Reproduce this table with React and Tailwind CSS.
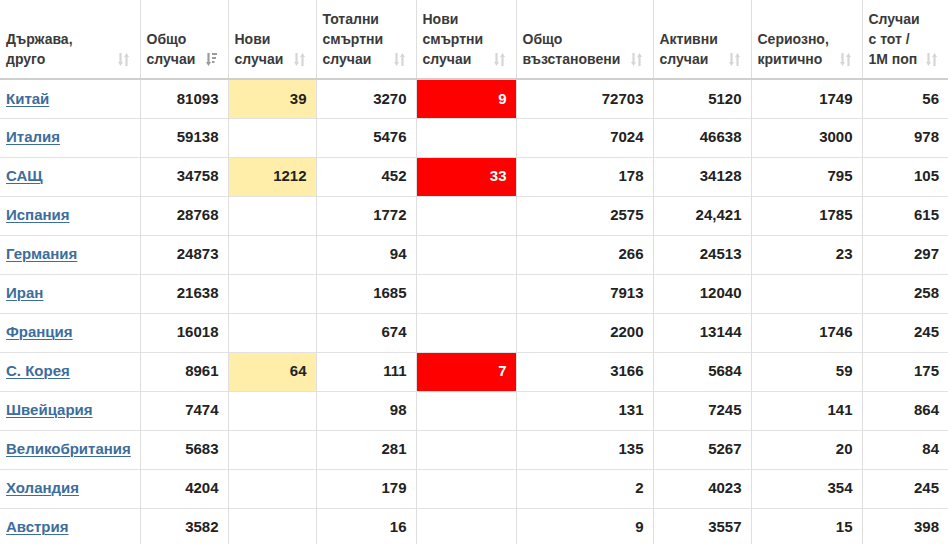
import React from "react";

const cols = [
  { w: 140, label: ["Държава,", "друго"] },
  { w: 88, label: ["Общо", "случаи"], sorted: true },
  { w: 88, label: ["Нови", "случаи"] },
  { w: 100, label: ["Тотални", "смъртни", "случаи"] },
  { w: 100, label: ["Нови", "смъртни", "случаи"] },
  { w: 137, label: ["Общо", "възстановени"] },
  { w: 98, label: ["Активни", "случаи"] },
  { w: 111, label: ["Сериозно,", "критично"] },
  { w: 86, label: ["Случаи", "с тот /", "1М поп"] },
];

const rows = [
  ["Китай", "81093", "39", "3270", "9", "72703", "5120", "1749", "56"],
  ["Италия", "59138", "", "5476", "", "7024", "46638", "3000", "978"],
  ["САЩ", "34758", "1212", "452", "33", "178", "34128", "795", "105"],
  ["Испания", "28768", "", "1772", "", "2575", "24,421", "1785", "615"],
  ["Германия", "24873", "", "94", "", "266", "24513", "23", "297"],
  ["Иран", "21638", "", "1685", "", "7913", "12040", "", "258"],
  ["Франция", "16018", "", "674", "", "2200", "13144", "1746", "245"],
  ["С. Корея", "8961", "64", "111", "7", "3166", "5684", "59", "175"],
  ["Швейцария", "7474", "", "98", "", "131", "7245", "141", "864"],
  ["Великобритания", "5683", "", "281", "", "135", "5267", "20", "84"],
  ["Холандия", "4204", "", "179", "", "2", "4023", "354", "245"],
  ["Австрия", "3582", "", "16", "", "9", "3557", "15", "398"],
];

function SortIcon() {
  const c = "#d6d6d6";
  return (
    <svg width="11" height="15" viewBox="0 0 11 15" className="shrink-0">
      <line x1="2.5" y1="1" x2="2.5" y2="11" stroke={c} strokeWidth="2.2" />
      <line x1="8.5" y1="4" x2="8.5" y2="14" stroke={c} strokeWidth="2.2" />
      <polygon points="0,10 5,10 2.5,14" fill={c} />
      <polygon points="6,5 11,5 8.5,1" fill={c} />
    </svg>
  );
}

function SortedIcon() {
  const c = "#9c9c9c";
  return (
    <svg width="11" height="15" viewBox="0 0 11 15" className="shrink-0">
      <line x1="2.5" y1="1" x2="2.5" y2="11" stroke={c} strokeWidth="2.2" />
      <polygon points="0,10 5,10 2.5,14" fill={c} />
      <rect x="6" y="1" width="5" height="2" fill={c} />
      <rect x="6" y="5" width="4" height="2" fill={c} />
      <rect x="6" y="9" width="2.5" height="2" fill={c} />
    </svg>
  );
}

export default function App() {
  return (
    <div
      className="w-[948px] h-[544px] overflow-hidden bg-white"
      style={{ fontFamily: '"Liberation Sans", Arial, sans-serif' }}
    >
      <table className="table-fixed border-collapse w-[948px]">
        <colgroup>
          {cols.map((c, i) => (
            <col key={i} style={{ width: c.w }} />
          ))}
        </colgroup>
        <thead>
          <tr className="h-[79px] border-b-2 border-[#cfcfcf]">
            {cols.map((c, i) => (
              <th
                key={i}
                className={`align-bottom text-left font-bold text-[14px] leading-[20px] text-[#3a3a3a] pl-[6px] pr-[11px] pb-[9px] ${
                  i > 0 ? "border-l border-[#dedede]" : ""
                }`}
              >
                <div className="flex items-end justify-between">
                  <div>
                    {c.label.map((l, j) => (
                      <div key={j} className="whitespace-nowrap">
                        {l}
                      </div>
                    ))}
                  </div>
                  <div className="pb-[2px]">
                    {c.sorted ? <SortedIcon /> : <SortIcon />}
                  </div>
                </div>
              </th>
            ))}
          </tr>
        </thead>
        <tbody>
          {rows.map((r, ri) => (
            <tr key={ri} className="h-[39px] border-b border-[#e2e2e2]">
              {r.map((v, ci) => {
                let bg = "";
                let color = "text-[#222]";
                if (ci === 2 && v) bg = "bg-[#ffeeaa]";
                if (ci === 4 && v) {
                  bg = "bg-[#ff0000]";
                  color = "text-white";
                }
                if (ci === 0) {
                  return (
                    <td
                      key={ci}
                      className="text-left pl-[6px] font-bold text-[15px] whitespace-nowrap"
                    >
                      <a className="text-[#3d6d9c] underline underline-offset-2 decoration-1">
                        {v}
                      </a>
                    </td>
                  );
                }
                return (
                  <td
                    key={ci}
                    className={`text-right pr-[9px] font-bold text-[15px] border-l border-[#dedede] ${bg} ${color}`}
                  >
                    {v}
                  </td>
                );
              })}
            </tr>
          ))}
        </tbody>
      </table>
    </div>
  );
}
